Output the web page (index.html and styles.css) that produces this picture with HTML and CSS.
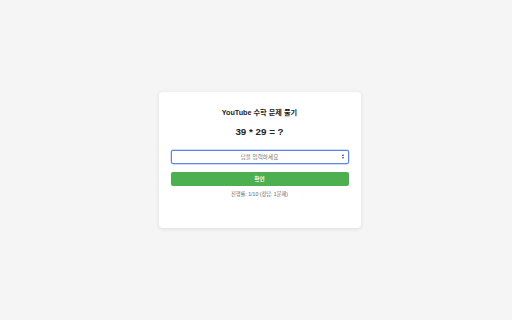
FILE: index.html
```
<!DOCTYPE html>
<html lang="ko">
<head>
<meta charset="utf-8">
<link rel="stylesheet" href="styles.css">
</head>
<body>
<div class="page">
  <div class="card">
    <h2 class="title">YouTube 수학 문제 풀기</h2>
    <div class="question">39 * 29 = ?</div>
    <div class="field">
      <input class="answer" type="text" placeholder="답을 입력하세요">
      <span class="spin"><i class="up"></i><i class="down"></i></span>
    </div>
    <button class="submit">확인</button>
    <div class="progress">진행률: 1/10 (정답: 1문제)</div>
  </div>
</div>
</body>
</html>
```
FILE: styles.css
```
html, body {
  margin: 0;
  padding: 0;
  height: 100%;
}
body {
  background: #f5f5f5;
  font-family: "Liberation Sans", "Noto Sans CJK KR", sans-serif;
}
.page {
  height: 100%;
  display: flex;
  align-items: center;
  justify-content: center;
  padding-left: 7px;
  box-sizing: border-box;
}
.card {
  width: 202px;
  box-sizing: border-box;
  background: #fff;
  border-radius: 4px;
  box-shadow: 0 1px 4px rgba(0,0,0,0.1);
  padding: 12px 12px 30px 12px;
  display: flex;
  flex-direction: column;
  align-items: stretch;
  text-align: center;
}
.title {
  margin: 4px 0 0;
  font-size: 7.2px;
  line-height: 10px;
  font-weight: bold;
  color: #222;
}
.question {
  margin-top: 8px;
  font-size: 9.8px;
  line-height: 12px;
  font-weight: bold;
  color: #222;
}
.field {
  position: relative;
  margin-top: 11.5px;
}
.answer {
  display: block;
  width: 100%;
  height: 14.5px;
  box-sizing: border-box;
  margin: 0;
  padding: 0 8px;
  border: 1px solid #5b86e5;
  box-shadow: 0 0 0 0.4px #9db7f0;
  border-radius: 2px;
  outline: none;
  font-family: inherit;
  font-size: 5.6px;
  text-align: center;
  color: #333;
}
.answer::placeholder {
  color: #777;
}
.spin {
  position: absolute;
  right: 4px;
  top: 4px;
  width: 3px;
  display: flex;
  flex-direction: column;
  gap: 1px;
  align-items: center;
}
.spin i {
  display: block;
  width: 0;
  height: 0;
  border-left: 1.2px solid transparent;
  border-right: 1.2px solid transparent;
}
.spin .up {
  border-bottom: 2px solid #444;
}
.spin .down {
  border-top: 2px solid #444;
}
.submit {
  margin-top: 8px;
  height: 14px;
  padding: 0;
  border: none;
  border-radius: 2px;
  background: #4caf50;
  color: #fff;
  font-family: inherit;
  font-size: 5.6px;
  font-weight: bold;
}
.progress {
  margin-top: 3.5px;
  font-size: 5.2px;
  line-height: 8px;
  color: #666;
}
```
